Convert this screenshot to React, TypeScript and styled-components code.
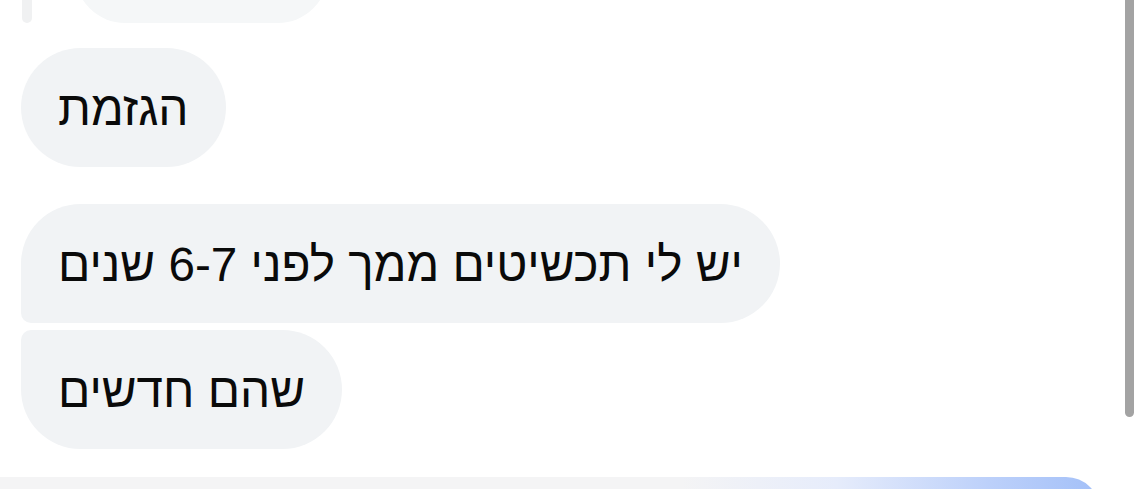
import { FC } from "react";
import styled, { createGlobalStyle } from "styled-components";

const GlobalStyle = createGlobalStyle`
  html, body {
    margin: 0;
    padding: 0;
    background: #ffffff;
    overflow: hidden;
  }
  body {
    font-family: "Liberation Sans", "DejaVu Sans", sans-serif;
  }
`;

const Screen = styled.div`
  width: 1143px;
  height: 489px;
  display: flex;
  flex-direction: column;
  overflow: hidden;
  background: #ffffff;
`;

const ChatArea = styled.div`
  height: 477px;
  flex-shrink: 0;
  display: flex;
  flex-direction: row;
`;

const Thread = styled.div`
  flex: 1;
  display: flex;
  flex-direction: column;
  align-items: flex-start;
  padding-left: 21px;
`;

const ReplyRow = styled.div`
  display: flex;
  flex-direction: row;
  align-items: flex-start;
  gap: 43px;
  margin-top: -77px;
  margin-bottom: 25px;
`;

const ReplyBar = styled.div`
  width: 10px;
  height: 100px;
  margin-left: 1px;
  border-radius: 5px;
  background: #f0f1f2;
`;

const ReplyBubble = styled.div`
  width: 253px;
  height: 100px;
  border-radius: 0 0 50px 50px;
  background: #f5f7f8;
`;

type Corner = "single" | "first" | "last";

const radii: Record<Corner, string> = {
  single: "60px",
  first: "60px 60px 60px 10px",
  last: "10px 60px 60px 60px",
};

const Bubble = styled.div<{ $corner: Corner; $gap: number }>`
  direction: rtl;
  box-sizing: border-box;
  height: 119px;
  display: flex;
  align-items: center;
  padding: 2px 37px 0 37px;
  margin-top: ${(p) => p.$gap}px;
  border-radius: ${(p) => radii[p.$corner]};
  background: #f1f3f5;
  color: #0a0a0a;
  font-size: 47.7px;
  line-height: 1;
  white-space: nowrap;
`;

const ScrollRail = styled.div`
  width: 9px;
  margin: 0 9px 0 0;
  display: flex;
  flex-direction: column;
`;

const ScrollThumb = styled.div`
  height: 417px;
  border-radius: 0 0 5px 5px;
  background: #a3a3a3;
`;

const Composer = styled.div`
  width: 1100px;
  height: 40px;
  flex-shrink: 0;
  border-top-right-radius: 34px;
  background: linear-gradient(
    to right,
    #f4f4f5 0%,
    #f4f4f5 62%,
    #e6ecfb 76%,
    #bcd0fa 90%,
    #a3c0f8 100%
  );
`;

const messages: { text: string; corner: Corner; gap: number }[] = [
  { text: "הגזמת", corner: "single", gap: 0 },
  { text: "יש לי תכשיטים ממך לפני 6-7 שנים", corner: "first", gap: 37 },
  { text: "שהם חדשים", corner: "last", gap: 7 },
];

const App: FC = () => {
  return (
    <Screen>
      <GlobalStyle />
      <ChatArea>
        <Thread>
          <ReplyRow>
            <ReplyBar />
            <ReplyBubble />
          </ReplyRow>
          {messages.map((m) => (
            <Bubble key={m.text} $corner={m.corner} $gap={m.gap}>
              {m.text}
            </Bubble>
          ))}
        </Thread>
        <ScrollRail>
          <ScrollThumb />
        </ScrollRail>
      </ChatArea>
      <Composer />
    </Screen>
  );
};

export default App;
